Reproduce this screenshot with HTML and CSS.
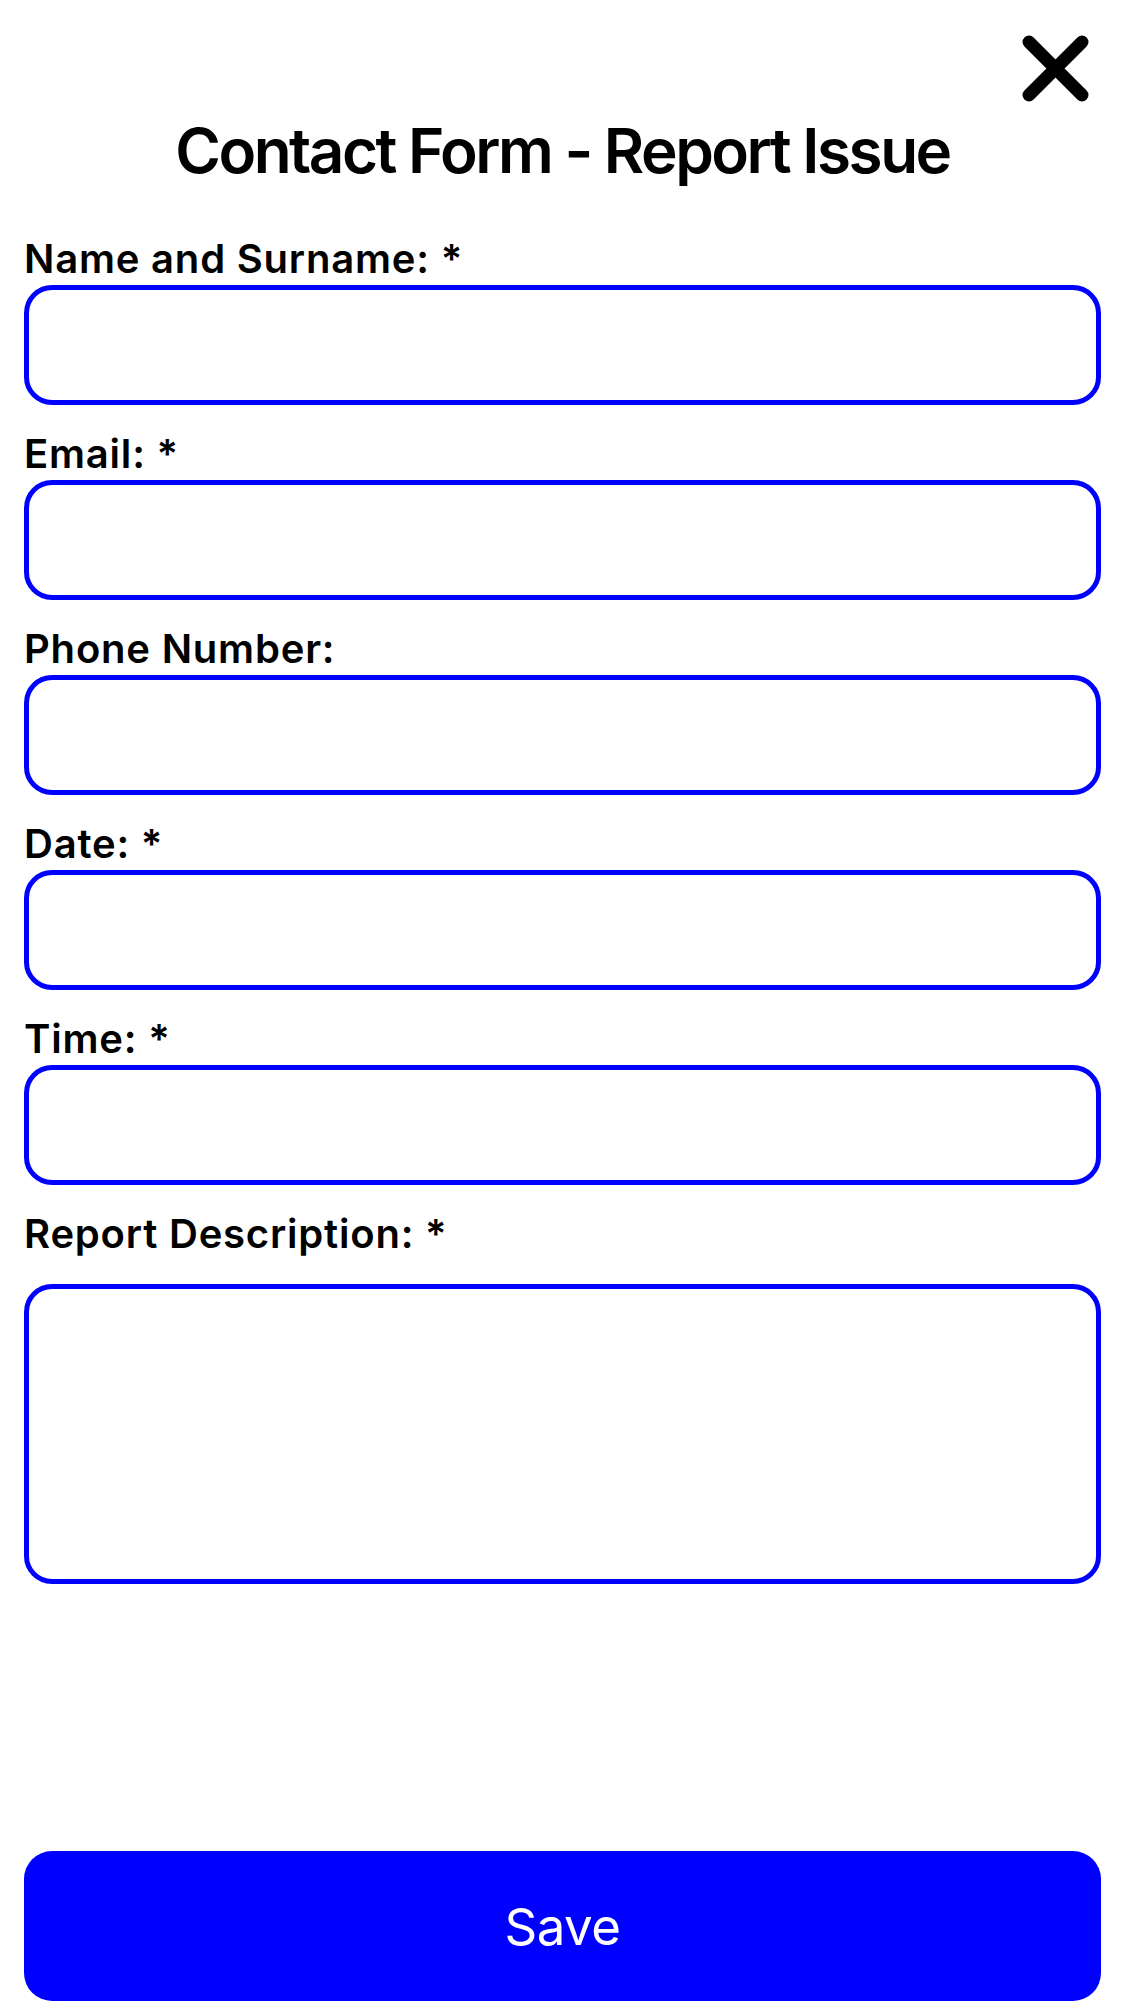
FILE: index.html
```html
<!DOCTYPE html>
<html lang="en">
<head>
<meta charset="utf-8">
<title>Contact Form - Report Issue</title>
<link rel="stylesheet" href="styles.css">
</head>
<body>
<main class="sheet">
  <header class="topbar">
    <button class="close" type="button" aria-label="Close">
      <svg class="close-icon" viewBox="0 0 67 67" width="67" height="67" aria-hidden="true">
        <path d="M7 7 L60 60 M60 7 L7 60" fill="none" stroke="#000" stroke-width="13" stroke-linecap="round"/>
      </svg>
    </button>
  </header>
  <h1 class="title">Contact Form - Report Issue</h1>
  <form class="form">
    <div class="field">
      <label class="label" for="name">Name and Surname: *</label>
      <input class="input" id="name" type="text">
    </div>
    <div class="field">
      <label class="label" for="email">Email: *</label>
      <input class="input" id="email" type="email">
    </div>
    <div class="field">
      <label class="label" for="phone">Phone Number:</label>
      <input class="input" id="phone" type="tel">
    </div>
    <div class="field">
      <label class="label" for="date">Date: *</label>
      <input class="input" id="date" type="text">
    </div>
    <div class="field">
      <label class="label" for="time">Time: *</label>
      <input class="input" id="time" type="text">
    </div>
    <div class="field field-area">
      <label class="label" for="desc">Report Description: *</label>
      <textarea class="input textarea" id="desc"></textarea>
    </div>
  </form>
  <button class="save" type="button">Save</button>
</main>
</body>
</html>
```

FILE: styles.css
```css
* {
  box-sizing: border-box;
}

html, body {
  margin: 0;
  padding: 0;
  background: #ffffff;
}

body {
  font-family: Inter, "Noto Sans", "Liberation Sans", sans-serif;
  color: #000000;
}

.sheet {
  min-height: 2001px;
  display: flex;
  flex-direction: column;
  padding: 0 24px;
}

.topbar {
  display: flex;
  justify-content: flex-end;
  padding-top: 35px;
  padding-right: 12px;
}

.close {
  width: 67px;
  height: 67px;
  padding: 0;
  margin: 0;
  border: none;
  background: transparent;
  display: block;
}

.close-icon {
  display: block;
}

.title {
  margin: 12px 0 0;
  font-size: 62px;
  line-height: 74px;
  font-weight: 600;
  text-align: center;
  letter-spacing: -2.5px;
}

.form {
  display: flex;
  flex-direction: column;
  gap: 29px;
  margin-top: 51px;
}

.field {
  display: flex;
  flex-direction: column;
}

.label {
  font-size: 40px;
  line-height: 40px;
  font-weight: 600;
  margin-bottom: 6px;
  letter-spacing: 0.8px;
}

.field-area .label {
  margin-bottom: 30px;
}

.input {
  display: block;
  width: 100%;
  height: 120px;
  border: 5px solid #0000ff;
  border-radius: 28px;
  background: #ffffff;
  outline: none;
  font: inherit;
  font-size: 40px;
  padding: 0 24px;
}

.textarea {
  height: 300px;
  resize: none;
  padding: 20px 24px;
}

.save {
  margin-top: auto;
  height: 150px;
  width: 100%;
  border: none;
  border-radius: 28px;
  background: #0000ff;
  color: #ffffff;
  font-family: Inter, "Noto Sans", "Liberation Sans", sans-serif;
  font-size: 51px;
  font-weight: 400;
  letter-spacing: -0.5px;
}
```
